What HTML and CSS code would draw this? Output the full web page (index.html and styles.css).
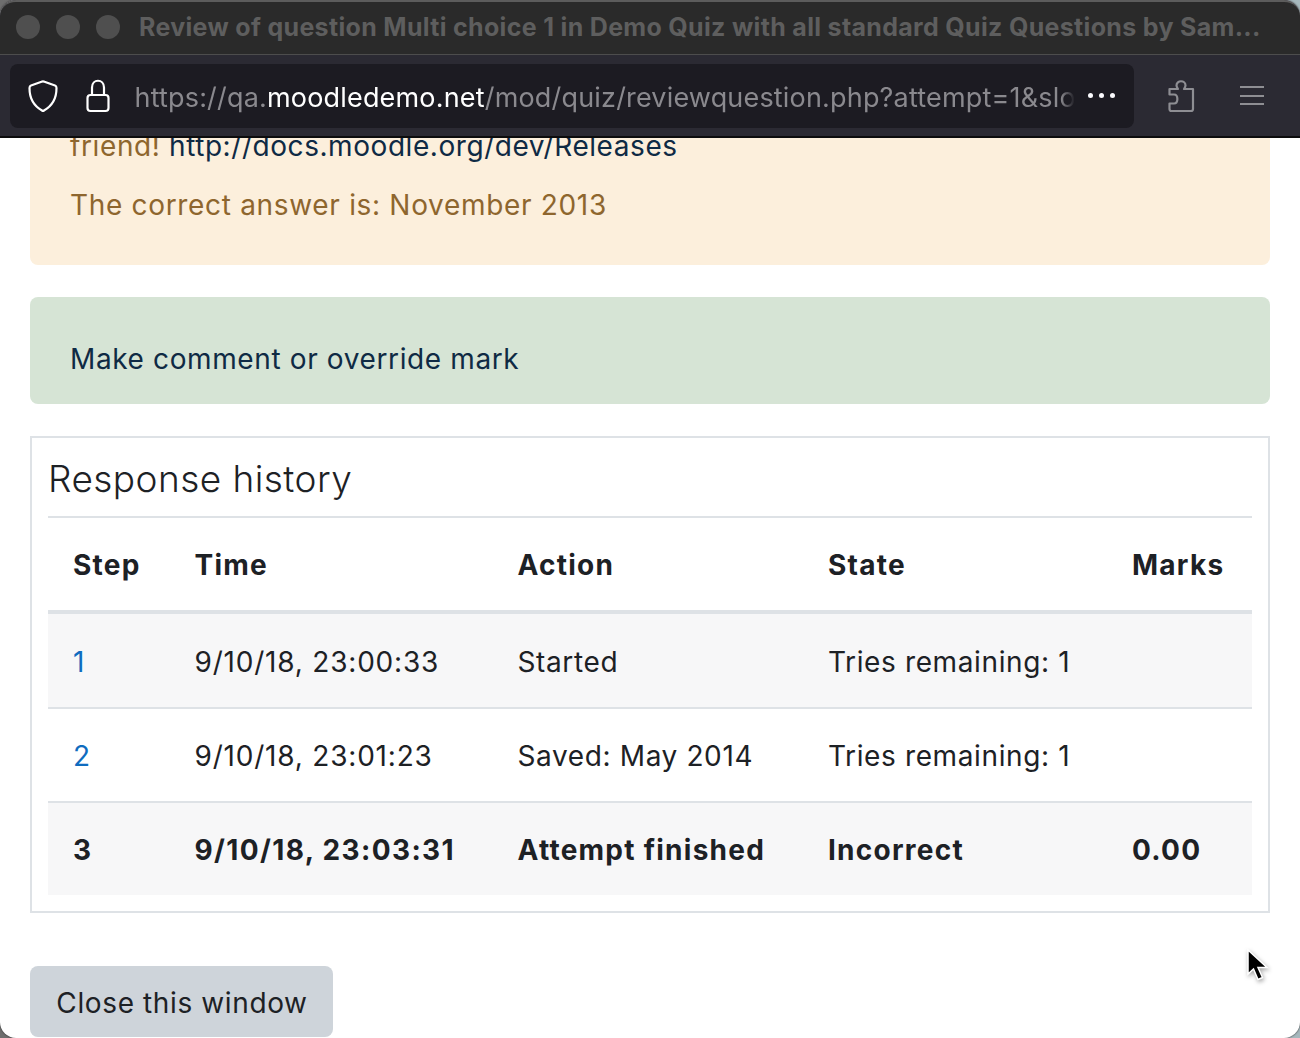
FILE: index.html
```html
<!DOCTYPE html>
<html lang="en">
<head>
<meta charset="utf-8">
<title>Review of question</title>
<link rel="stylesheet" href="styles.css">
</head>
<body>
<div class="window">
  <header class="chrome">
    <div class="titlebar">
      <div class="lights"><span></span><span></span><span></span></div>
      <div class="title">Review of question Multi choice 1 in Demo Quiz with all standard Quiz Questions by Sam...</div>
    </div>
    <div class="toolbar">
      <div class="urlbar">
        <svg class="shield" width="30" height="34" viewBox="0 0 30 34"><path d="M13.500 2.800 Q15 2 16.500 2.800 L27 6.500 Q28.500 7 28.500 9 C28.500 19 24 27 16 31.500 Q15 32.200 14 31.500 C6 27 1.500 19 1.500 9 Q1.500 7 3 6.500 Z" fill="none" stroke="#fff" stroke-width="2.200" stroke-linejoin="round"/></svg>
        <svg class="lock" width="26" height="34" viewBox="0 0 26 34"><path d="M7 16 V8.500 C7 -0.500 19 -0.500 19 8.500 V16" fill="none" stroke="#fff" stroke-width="2.200"/><rect x="2.500" y="16" width="21" height="16" rx="3" fill="none" stroke="#fff" stroke-width="2.200"/></svg>
        <div class="url"><span class="dim">https://qa.</span><span class="host">moodledemo.net</span><span class="dim">/mod/quiz/reviewquestion.php?attempt=1&amp;slot=1</span></div>
        <div class="dots"><span></span><span></span><span></span></div>
      </div>
      <svg class="puzzle" width="30" height="34" viewBox="0 0 30 34"><path d="M3.500 10 H12 C11 8.500 10.500 7.500 10.500 6.500 C10.500 0.800 19.500 0.800 19.500 6.500 C19.500 7.500 19 8.500 18 10 H27 V30 C27 31.200 26.200 32 25 32 H5.500 C4.300 32 3.500 31.200 3.500 30 V24.500 H8 C12.500 24.500 12.500 15.500 8 15.500 H3.500 Z" fill="none" stroke="#8e8e93" stroke-width="2.200" stroke-linejoin="round"/></svg>
      <div class="menu"><span></span><span></span><span></span></div>
    </div>
  </header>
  <main class="page">
    <section class="feedback">
      <p>friend! <a class="doclink" href="#">http://docs.moodle.org/dev/Releases</a></p>
      <p class="answer">The correct answer is: November 2013</p>
    </section>
    <section class="comment"><a href="#">Make comment or override mark</a></section>
    <section class="history">
      <h3>Response history</h3>
      <table>
        <thead>
          <tr><th class="c1">Step</th><th class="c2">Time</th><th class="c3">Action</th><th class="c4">State</th><th>Marks</th></tr>
        </thead>
        <tbody>
          <tr><td><a class="step" href="#">1</a></td><td class="time">9/10/18, 23:00:33</td><td>Started</td><td>Tries remaining: 1</td><td></td></tr>
          <tr><td><a class="step" href="#">2</a></td><td class="time">9/10/18, 23:01:23</td><td>Saved: May 2014</td><td>Tries remaining: 1</td><td></td></tr>
          <tr class="current"><td>3</td><td class="time">9/10/18, 23:03:31</td><td>Attempt finished</td><td>Incorrect</td><td>0.00</td></tr>
        </tbody>
      </table>
    </section>
    <button class="close" type="button">Close this window</button>
  </main>
  <svg class="cursor" width="24" height="36" viewBox="0 0 24 36"><path d="M2 2 L2 26 L7.500 21 L12 31.500 L16.500 29.500 L12 19.500 L21 19.500 Z" fill="#000" stroke="#fff" stroke-width="1.500"/></svg>
</div>
</body>
</html>
```
FILE: styles.css
```css
* { box-sizing: border-box; }
html, body { margin: 0; padding: 0; height: 1038px; overflow: hidden; }
body {
  background: linear-gradient(90deg, #6e6e6e 0, #8f8f8f 50%, #a6b8bd 100%);
  font-family: Inter, "Liberation Sans", sans-serif;
  color: #1d2125;
}
.window {
  position: relative;
  width: 1300px;
  height: 1038px;
  background: #fff;
  border-radius: 16px;
  box-shadow: 0 0 2px #222;
  overflow: hidden;
  display: flex;
  flex-direction: column;
}
.chrome {
  flex: none;
  height: 138px;
  background: #2b2a33;
  border-bottom: 2px solid #0c0c0d;
  position: relative;
  z-index: 2;
}
.titlebar {
  height: 55px;
  background: #2a2a2a;
  border-top: 2px solid #5c5c5c;
  border-bottom: 1px solid #4d4d4d;
  border-radius: 16px 16px 0 0;
  display: flex;
  align-items: center;
  padding-bottom: 2px;
}
.lights { display: flex; gap: 16px; margin-left: 16px; }
.lights span { width: 24px; height: 24px; border-radius: 50%; background: #4f4f4f; }
.title {
  margin-left: 19px;
  font-size: 25px;
  font-weight: 700;
  color: #5e5e5e;
  white-space: nowrap;
  letter-spacing: 0.32px;
}
.toolbar {
  height: 81px;
  display: flex;
  align-items: center;
  padding: 0 0 0 10px;
}
.urlbar {
  width: 1124px;
  height: 64px;
  background: #1c1b22;
  border-radius: 8px;
  display: flex;
  align-items: center;
  padding-left: 18px;
}
.shield { flex: none; }
.lock { flex: none; margin-left: 27px; }
.url {
  margin-left: 23.500px;
  width: 940.500px;
  overflow: hidden;
  white-space: nowrap;
  font-size: 27px;
  letter-spacing: 0.18px;
  padding-top: 3px;
  -webkit-mask-image: linear-gradient(90deg, #000 98.500%, transparent);
  mask-image: linear-gradient(90deg, #000 98.500%, transparent);
}
.dim { color: #8a898e; }
.host { color: #fff; }
.dots { display: flex; gap: 6px; margin-left: 13px; }
.dots span { width: 5px; height: 5px; border-radius: 50%; background: #fbfbfe; }
.puzzle { flex: none; margin-left: 32px; }
.menu { display: flex; flex-direction: column; gap: 6.500px; margin-left: 44px; }
.menu span { width: 24px; height: 2px; background: #8e8e93; }
.page { flex: 1; padding: 0 30px; overflow: hidden; font-size: 28px; letter-spacing: 0.62px; }
.feedback {
  margin-top: -13px;
  height: 140px;
  background: #fcefdc;
  border-radius: 0 0 8px 8px;
  padding: 0 40px;
  color: #8e662e;
}
.feedback p { margin: 0; line-height: 42px; }
.feedback .answer { margin-top: 17px; letter-spacing: 0.68px; }
.doclink { color: #0f2a44; text-decoration: none; letter-spacing: 0.56px; }
.comment {
  margin-top: 32px;
  height: 107px;
  background: #d6e4d5;
  border-radius: 8px;
  padding: 41px 40px 0;
  line-height: 42px;
}
.comment a { color: #0f2a44; text-decoration: none; }
.history {
  margin-top: 32px;
  height: 477px;
  border: 2px solid #dee2e6;
  padding: 0 16px 16px;
}
.history h3 {
  margin: 0;
  height: 80px;
  font-size: 37px;
  font-weight: 300;
  letter-spacing: 0.45px;
  line-height: 82px;
  border-bottom: 2px solid #dee2e6;
}
table { width: 100%; border-collapse: separate; border-spacing: 0; table-layout: fixed; }
th, td { padding: 0 0 0 25px; text-align: left; }
th { height: 96px; font-weight: 700; letter-spacing: 1.25px; border-bottom: 4px solid #dee2e6; padding-top: 2px; }
td { height: 94px; border-top: 2px solid #dee2e6; padding-top: 2px; }
.c1 { width: 121.500px; }
.c2 { width: 323px; }
.c3 { width: 310.500px; }
.c4 { width: 304px; }
tbody tr:nth-child(odd) { background: #f7f7f8; }
tbody tr:first-child td { border-top: 0; height: 93px; padding-top: 3px; }
.time { letter-spacing: 0.8px; }
.current td { font-weight: 700; letter-spacing: 1.25px; }
.current td.time { letter-spacing: 1.37px; }
.step { color: #0f6cbf; text-decoration: none; }
.close {
  display: block;
  margin: 53px 0 0;
  width: 303px;
  height: 71px;
  border: 0;
  border-radius: 8px;
  background: #ced4da;
  color: #1d2125;
  font: inherit;
  letter-spacing: inherit;
  padding: 2px 0 0 1px;
}
.cursor { position: absolute; left: 1246px; top: 948px; filter: drop-shadow(1px 2px 2px rgba(0,0,0,.35)); }
```
